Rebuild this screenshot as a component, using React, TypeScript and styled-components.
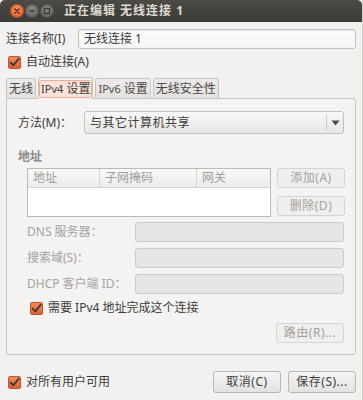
import React from "react";
import styled, { createGlobalStyle, css } from "styled-components";

const Global = createGlobalStyle`
  html, body { margin: 0; padding: 0; background: #f2f1f0; }
  body {
    font-family: "Noto Sans", "Noto Sans CJK SC", sans-serif;
    font-size: 12px;
    line-height: 16px;
    color: #3c3c3c;
  }
  * { box-sizing: border-box; }
`;

const Window = styled.div`
  width: 363px;
  height: 400px;
  background: #f2f1f0;
  display: flex;
  flex-direction: column;
  overflow: hidden;
  border-right: 1px solid #cfccc8;
`;

const TitleBar = styled.div`
  height: 22px;
  flex: none;
  background: linear-gradient(#4b4a45, #3c3b37);
  border-radius: 5px 5px 0 0;
  display: flex;
  align-items: center;
  padding-left: 10px;
  color: #dfdbd2;
  font-weight: bold;
  font-size: 12px;
`;

const WinButtons = styled.div`
  display: flex;
  gap: 1px;
  margin-right: 10px;
`;

const WinBtn = styled.div<{ $close?: boolean }>`
  width: 14px;
  height: 14px;
  border-radius: 50%;
  display: flex;
  align-items: center;
  justify-content: center;
  background: ${(p) =>
    p.$close
      ? "radial-gradient(circle at 50% 35%, #f7905f, #e0521d)"
      : "radial-gradient(circle at 50% 35%, #85837c, #5e5d58)"};
  box-shadow: inset 0 0 0 1px rgba(0, 0, 0, 0.25);
`;

const TitleText = styled.span`
  letter-spacing: 1px;
  white-space: pre;
`;

const Body = styled.div`
  flex: 1;
  display: flex;
  flex-direction: column;
  padding: 0 6px 0 6px;
`;

const Row = styled.div<{ $mt?: number; $ml?: number }>`
  display: flex;
  align-items: center;
  margin-top: ${(p) => p.$mt ?? 0}px;
  margin-left: ${(p) => p.$ml ?? 0}px;
`;

const Label = styled.div<{ $w?: number; $disabled?: boolean }>`
  width: ${(p) => (p.$w ? `${p.$w}px` : "auto")};
  flex: none;
  color: ${(p) => (p.$disabled ? "#a5a29e" : "#3c3c3c")};
  white-space: nowrap;
`;

const Entry = styled.div<{ $disabled?: boolean; $h?: number }>`
  flex: 1;
  height: ${(p) => p.$h ?? 20}px;
  border-radius: 3px;
  display: flex;
  align-items: center;
  padding-left: 5px;
  ${(p) =>
    p.$disabled
      ? css`
          background: #e7e6e4;
          border: 1px solid #cdcac6;
        `
      : css`
          background: linear-gradient(#fbfbfb, #f6f6f6);
          border: 1px solid #c3c1bd;
          box-shadow: inset 0 1px 1px rgba(0, 0, 0, 0.07);
        `}
`;

const CheckBox = styled.div`
  width: 13px;
  height: 13px;
  flex: none;
  border-radius: 2px;
  background: linear-gradient(#f48a5b, #e2602e);
  border: 1px solid #b8542b;
  display: flex;
  align-items: center;
  justify-content: center;
  margin: 0 5px 0 2px;
`;

const Check = () => (
  <CheckBox>
    <svg width="11" height="11" viewBox="0 0 11 11">
      <path d="M1.8 5.6 L4.3 8.4 L9.6 1.8" fill="none" stroke="#3b3a36" strokeWidth="1.9" strokeLinecap="round" strokeLinejoin="round" />
    </svg>
  </CheckBox>
);

const Tabs = styled.div`
  display: flex;
  align-items: flex-end;
  margin-top: 7px;
  gap: 2px;
  height: 21px;
  position: relative;
  z-index: 1;
`;

const Tab = styled.div<{ $active?: boolean }>`
  height: 20px;
  padding: 0 2px;
  display: flex;
  align-items: center;
  border: 1px solid #c8c5c1;
  border-bottom: none;
  border-radius: 3px 3px 0 0;
  background: linear-gradient(#ebeae8, #e2e1de);
  color: #4a4a4a;
  white-space: pre;
  ${(p) =>
    p.$active &&
    css`
      height: 22px;
      margin-bottom: -1px;
      padding: 0;
      background: #f4f3f2;
      color: #3c3c3c;
    `}
`;

const Latin = styled.span`
  font-size: 11px;
`;

const Focus = styled.span`
  border: 1px solid #f0ad92;
  background: #f9e3d8;
  border-radius: 3px;
  padding: 0 1px;
  line-height: 16px;
  white-space: pre;
`;

const Frame = styled.div`
  height: 257px;
  border: 1px solid #c8c5c1;
  border-radius: 0 3px 3px 3px;
  background: #f4f3f2;
  padding: 12px 11px 0 11px;
  display: flex;
  flex-direction: column;
`;

const Combo = styled.div`
  flex: 1;
  height: 23px;
  border: 1px solid #c3c1bd;
  border-radius: 3px;
  background: linear-gradient(#f7f7f6, #e8e7e5);
  display: flex;
  align-items: center;
  padding-left: 5px;
`;

const ComboText = styled.span`
  flex: 1;
  letter-spacing: 0.5px;
`;

const ComboSep = styled.div`
  width: 1px;
  align-self: stretch;
  margin: 3px 0;
  background: #cdcac6;
`;

const ComboArrow = styled.div`
  width: 16px;
  display: flex;
  justify-content: center;
`;

const Heading = styled.div`
  margin-top: 15px;
  color: #8c8a86;
  font-weight: bold;
`;

const AddrGroup = styled.div`
  display: flex;
  margin: 3px 0 0 9px;
  gap: 6px;
`;

const Table = styled.div`
  width: 244px;
  height: 49px;
  border: 1px solid #bdbab6;
  background: #fff;
`;

const THead = styled.div`
  display: flex;
  height: 19px;
  background: linear-gradient(#f8f8f7, #ececeb);
  border-bottom: 1px solid #d6d4d1;
`;

const Th = styled.div<{ $w: number }>`
  width: ${(p) => p.$w}px;
  padding-left: 5px;
  display: flex;
  align-items: center;
  color: #a09e9a;
  border-right: 1px solid #d6d4d1;
  &:last-child { border-right: none; flex: 1; }
`;

const BtnCol = styled.div`
  display: flex;
  flex-direction: column;
  gap: 8px;
`;

const Button = styled.div<{ $w?: number; $h?: number; $disabled?: boolean }>`
  width: ${(p) => p.$w ?? 68}px;
  height: ${(p) => p.$h ?? 20}px;
  border: 1px solid ${(p) => (p.$disabled ? "#d5d3d0" : "#b9b6b2")};
  border-radius: 3px;
  background: ${(p) => (p.$disabled ? "#f0efed" : "linear-gradient(#f6f5f4, #e3e2e0)")};
  color: ${(p) => (p.$disabled ? "#a4a19d" : "#3c3c3c")};
  display: flex;
  align-items: center;
  justify-content: center;
  white-space: nowrap;
  letter-spacing: 0.5px;
`;

const FieldRow = styled.div<{ $mt: number }>`
  display: flex;
  align-items: center;
  margin: ${(p) => p.$mt}px 0 0 9px;
`;

const Spacer = styled.div`
  flex: 1;
`;

export default function App() {
  return (
    <>
      <Global />
      <Window>
        <TitleBar>
          <WinButtons>
            <WinBtn $close>
              <svg width="8" height="8" viewBox="0 0 8 8">
                <path d="M2 2 L6 6 M6 2 L2 6" stroke="#4a2a1c" strokeWidth="1.4" strokeLinecap="round" />
              </svg>
            </WinBtn>
            <WinBtn>
              <svg width="8" height="8" viewBox="0 0 8 8">
                <path d="M1.5 4 H6.5" stroke="#3a3935" strokeWidth="1.5" />
              </svg>
            </WinBtn>
            <WinBtn>
              <svg width="8" height="8" viewBox="0 0 8 8">
                <rect x="1.5" y="1.5" width="5" height="5" fill="none" stroke="#3a3935" strokeWidth="1.2" />
              </svg>
            </WinBtn>
          </WinButtons>
          <TitleText>正在编辑 无线连接 1</TitleText>
        </TitleBar>
        <Body>
          <Row $mt={7}>
            <Label $w={72}>连接名称(I)</Label>
            <Entry>无线连接 1</Entry>
          </Row>
          <Row $mt={5}>
            <Check />
            <Label>自动连接(A)</Label>
          </Row>
          <Tabs>
            <Tab>无线</Tab>
            <Tab $active>
              <Focus>
                <Latin>IPv4</Latin>
                {" 设置"}
              </Focus>
            </Tab>
            <Tab>
              <Latin>IPv6</Latin>
              {" 设置"}
            </Tab>
            <Tab>无线安全性</Tab>
          </Tabs>
          <Frame>
            <Row>
              <Label $w={66}>方法(M)：</Label>
              <Combo>
                <ComboText>与其它计算机共享</ComboText>
                <ComboSep />
                <ComboArrow>
                  <svg width="9" height="6" viewBox="0 0 9 6">
                    <path d="M0.5 0.5 L8.5 0.5 L4.5 5.5 Z" fill="#4a4a48" />
                  </svg>
                </ComboArrow>
              </Combo>
            </Row>
            <Heading>地址</Heading>
            <AddrGroup>
              <Table>
                <THead>
                  <Th $w={72}>地址</Th>
                  <Th $w={97}>子网掩码</Th>
                  <Th $w={73}>网关</Th>
                </THead>
              </Table>
              <BtnCol>
                <Button $disabled>添加(A)</Button>
                <Button $disabled>删除(D)</Button>
              </BtnCol>
            </AddrGroup>
            <FieldRow $mt={5}>
              <Label $w={108} $disabled>DNS 服务器：</Label>
              <Entry $disabled />
            </FieldRow>
            <FieldRow $mt={6}>
              <Label $w={108} $disabled>搜索域(S)：</Label>
              <Entry $disabled />
            </FieldRow>
            <FieldRow $mt={6}>
              <Label $w={108} $disabled>DHCP 客户端 ID：</Label>
              <Entry $disabled />
            </FieldRow>
            <Row $mt={6} $ml={10}>
              <Check />
              <Label>需要 IPv4 地址完成这个连接</Label>
            </Row>
            <Row $mt={7}>
              <Spacer />
              <Button $disabled>路由(R)...</Button>
            </Row>
          </Frame>
          <Row $mt={16}>
            <Check />
            <Label>对所有用户可用</Label>
            <Spacer />
            <Button $w={68} $h={22}>取消(C)</Button>
            <Button $w={68} $h={22} style={{ marginLeft: 7 }}>保存(S)...</Button>
          </Row>
        </Body>
      </Window>
    </>
  );
}
